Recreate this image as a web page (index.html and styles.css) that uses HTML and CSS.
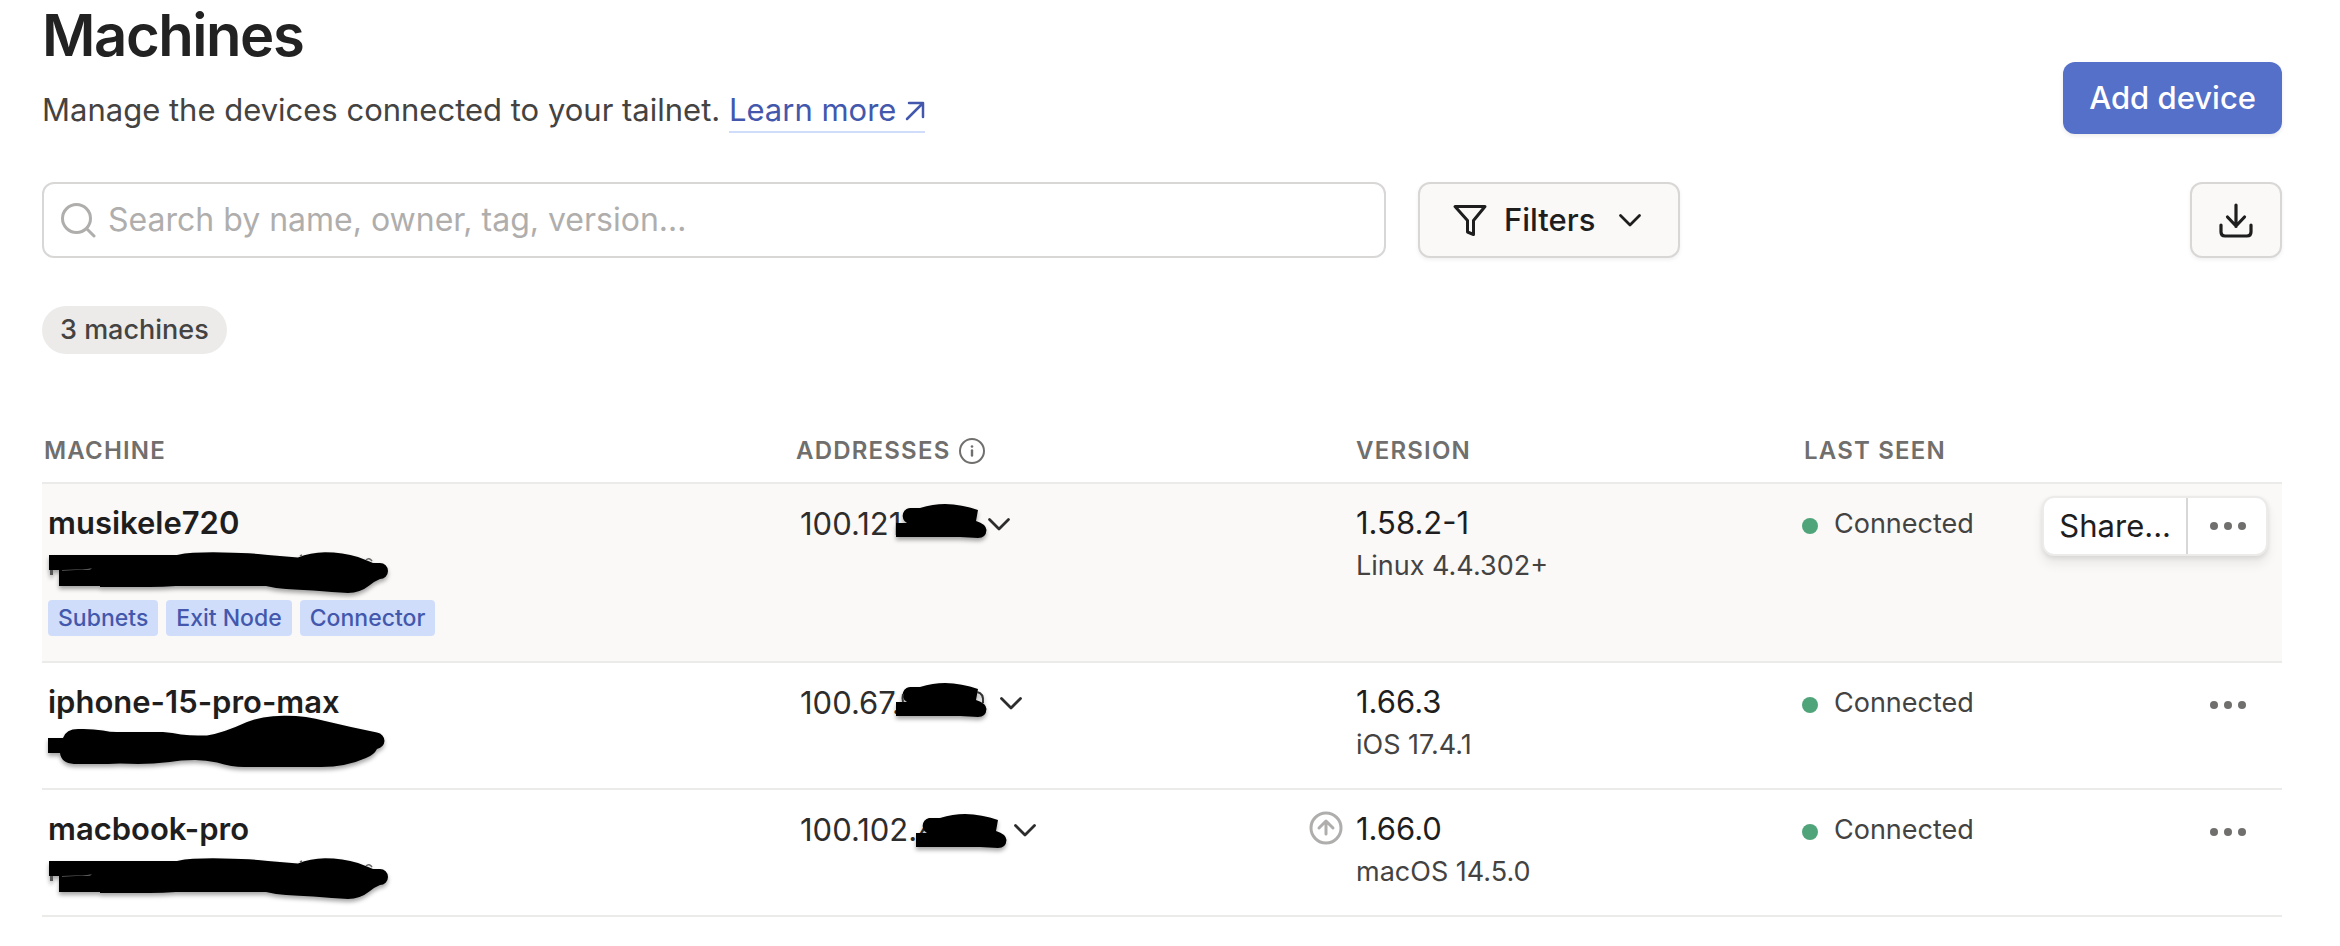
FILE: index.html
```html
<!DOCTYPE html>
<html lang="en">
<head>
<meta charset="utf-8">
<title>Machines</title>
<link rel="stylesheet" href="styles.css">
</head>
<body>
<svg class="sprite" aria-hidden="true">
  <symbol id="chevron" viewBox="0 0 24 24"><path d="M2.500 7.500l9.500 9.500 9.500-9.500" fill="none" stroke="currentColor" stroke-width="2.800" stroke-linecap="round" stroke-linejoin="round"/></symbol>
  <symbol id="dots" viewBox="0 0 36 8"><circle cx="4" cy="4" r="4"/><circle cx="18" cy="4" r="4"/><circle cx="32" cy="4" r="4"/></symbol>
  <symbol id="mark-user" viewBox="0 0 340 36" overflow="visible">
    <path d="M1 5H129Q136 3 145 2.700Q165 2 185 2.700Q205 3 220 5L250 7.500Q262 2.500 277 2.300Q295 2.500 310 7Q318 10 325 13H332A8 8 0 0 1 332 29Q327 31 322 35Q312 43 300 43Q285 42 265 40.500Q250 39.500 238 39Q228 38.500 218 36H128Q115 37 102 37H52V36H11V20H1Z"/>
    <path d="M2 20h3v5h-3z" fill="#555"/><path d="M14 20l20-.5 10-1-2 1-28 1z" fill="#999"/><path d="M252 6l2-1M318 10q3-3 6 1" stroke="#666" stroke-width="1.500" fill="none"/>
  </symbol>
  <symbol id="mark-ip" viewBox="0 0 92 36" overflow="visible">
    <path d="M1 19H12A8 8 0 0 1 17 4H25Q38 0 50 0Q67 .5 83 6L81 17Q91 20 91.500 26Q91 34 83 34L65 33H1Z"/>
  </symbol>
</svg>
<main class="page">
  <header class="head">
    <div>
      <h1 class="title">Machines</h1>
      <p class="lead">Manage the devices connected to your tailnet. <a class="link" href="#">Learn more <svg class="arrow" viewBox="0 0 20 20" aria-hidden="true"><path d="M2 18L18 2M4 2h14v14" fill="none" stroke="currentColor" stroke-width="2.500" stroke-linecap="round" stroke-linejoin="round"/></svg></a></p>
    </div>
    <button class="btn primary" type="button">Add device</button>
  </header>
  <div class="tools">
    <label class="search">
      <svg class="icon-lg" viewBox="0 0 36 36" aria-hidden="true"><circle cx="16.500" cy="16.500" r="14" fill="none" stroke="currentColor" stroke-width="3"/><path d="M27 27l7 7" stroke="currentColor" stroke-width="3" stroke-linecap="round"/></svg>
      <input class="search-input" type="text" aria-label="Search machines" placeholder="Search by name, owner, tag, version…">
    </label>
    <button class="btn plain filters" type="button">
      <svg class="icon-lg" viewBox="0 0 36 36" aria-hidden="true"><path d="M3 4.500h30L21.500 18.500V32.500l-6-2.500V18.500z" fill="none" stroke="currentColor" stroke-width="3" stroke-linejoin="round"/></svg>
      Filters
      <svg class="icon-sm" aria-hidden="true"><use href="#chevron"/></svg>
    </button>
    <button class="btn plain download" type="button" aria-label="Download">
      <svg class="icon-lg" viewBox="0 0 36 36" aria-hidden="true"><path d="M18 3v21.500M9.500 15l8.500 9 8.500-9M3 23v7q0 4 4 4h22q4 0 4-4v-7" fill="none" stroke="currentColor" stroke-width="3.200" stroke-linecap="round" stroke-linejoin="round"/></svg>
    </button>
  </div>
  <div class="count">3 machines</div>
  <table class="machines">
    <thead>
      <tr>
        <th>Machine</th>
        <th class="c-addr"><span class="th-flex">Addresses <svg class="info" viewBox="0 0 28 28" aria-hidden="true"><circle cx="14" cy="14" r="12" fill="none" stroke="currentColor" stroke-width="2"/><path d="M14 13.500v5" stroke="currentColor" stroke-width="2.400" stroke-linecap="round"/><circle cx="14" cy="9.500" r="1.300" fill="currentColor"/></svg></span></th>
        <th class="c-ver">Version</th>
        <th class="c-seen">Last seen</th>
        <th class="c-menu" aria-label="Actions"></th>
      </tr>
    </thead>
    <tbody>
      <tr class="hovered">
        <td class="machine">
          <div class="name">musikele720</div>
          <div class="user"><svg class="mark-user" aria-hidden="true"><use href="#mark-user"/></svg></div>
          <div class="tags"><span class="tag">Subnets</span><span class="tag">Exit Node</span><span class="tag">Connector</span></div>
        </td>
        <td class="addr"><button class="ip" type="button">100.121<svg class="mark-ip" aria-hidden="true"><use href="#mark-ip"/></svg><svg class="icon-sm tight" aria-hidden="true"><use href="#chevron"/></svg></button></td>
        <td class="ver"><div class="num">1.58.2-1</div><div class="os">Linux 4.4.302+</div></td>
        <td class="seen"><span class="status"><i class="dot"></i>Connected</span></td>
        <td class="menu"><div class="actions"><button class="share" type="button">Share...</button><button class="more" type="button" aria-label="More"><svg class="dots" aria-hidden="true"><use href="#dots"/></svg></button></div></td>
      </tr>
      <tr>
        <td class="machine">
          <div class="name">iphone-15-pro-max</div>
          <div class="user"><svg class="mark-user" viewBox="0 0 340 36" aria-hidden="true"><path d="M0 9H15Q18 0 30 0Q44-.5 55 1.500Q62 3 69 3H115Q125 3.500 133 5.500Q142 6.500 150 6.500H159Q175 4 199-7Q213-13 236-13.300Q258-13.500 277-8L303-2 329 3.500Q336 5 336.500 12Q336 18 329 20Q326 26 318 29Q298 38 273 38H196Q184 38 169 33.500Q158 31 147 31Q132 31 122 33Q105 35 90 35L72 34.500 60 35H26Q13 34 12 24H0Z"/></svg></div>
        </td>
        <td class="addr"><button class="ip" type="button">100.67.<svg class="mark-ip" aria-hidden="true"><use href="#mark-ip"/><path d="M82 9q7 1 6 11M8 11q-1 4 0 8" fill="none" stroke="#333" stroke-width="2"/></svg><svg class="icon-sm" aria-hidden="true"><use href="#chevron"/></svg></button></td>
        <td class="ver"><div class="num">1.66.3</div><div class="os">iOS 17.4.1</div></td>
        <td class="seen"><span class="status"><i class="dot"></i>Connected</span></td>
        <td class="menu"><div class="actions bare"><button class="more" type="button" aria-label="More"><svg class="dots" aria-hidden="true"><use href="#dots"/></svg></button></div></td>
      </tr>
      <tr>
        <td class="machine">
          <div class="name">macbook-pro</div>
          <div class="user"><svg class="mark-user" aria-hidden="true"><use href="#mark-user"/></svg></div>
        </td>
        <td class="addr"><button class="ip" type="button">100.102.4<svg class="mark-ip over-digit" aria-hidden="true"><use href="#mark-ip"/></svg><svg class="icon-sm near" aria-hidden="true"><use href="#chevron"/></svg></button></td>
        <td class="ver"><svg class="update" viewBox="0 0 36 36" role="img" aria-label="Update available"><path d="M18 24V12M11 18l7-7 7 7" fill="none" stroke="currentColor" stroke-width="3" stroke-linecap="round" stroke-linejoin="round"/><circle cx="18" cy="18" r="15" fill="none" stroke="currentColor" stroke-width="3"/></svg><div class="num">1.66.0</div><div class="os">macOS 14.5.0</div></td>
        <td class="seen"><span class="status"><i class="dot"></i>Connected</span></td>
        <td class="menu"><div class="actions bare"><button class="more" type="button" aria-label="More"><svg class="dots" aria-hidden="true"><use href="#dots"/></svg></button></div></td>
      </tr>
    </tbody>
  </table>
</main>
</body>
</html>
```
FILE: styles.css
```css
*, *::before, *::after { box-sizing: border-box; }

body {
  margin: 0;
  background: #fff;
  color: #1f1e1e;
  font: 400 31px/48px Inter, "Liberation Sans", sans-serif;
}

button, input { font: inherit; color: inherit; }
button { margin: 0; cursor: pointer; }
svg { display: block; flex: none; }

.sprite { position: absolute; width: 0; height: 0; }
.page { padding: 0 58px 24px 42px; }

.head { display: flex; justify-content: space-between; align-items: flex-end; }
.title {
  margin: 0 0 16px;
  font-size: 58px;
  line-height: 70px;
  font-weight: 600;
  letter-spacing: -0.025em;
  color: #232222;
}
.lead { margin: 0; color: #444342; }
.link {
  display: inline-block;
  line-height: 42px;
  color: #4358ad;
  text-decoration: none;
  border-bottom: 2px solid #d0ddfa;
}
.arrow { display: inline-block; width: 20px; height: 20px; }

.btn {
  display: flex;
  align-items: center;
  justify-content: center;
  border-radius: 12px;
  font-weight: 500;
}
.primary {
  height: 72px;
  padding: 0 26px;
  border: 0;
  background: #5470c8;
  color: #fff;
  box-shadow: 0 2px 4px rgba(0, 0, 0, .08);
}
.plain {
  height: 76px;
  border: 2px solid #d9d6d6;
  background: #faf9f8;
  box-shadow: 0 2px 4px rgba(0, 0, 0, .06);
}

.tools { display: flex; gap: 32px; margin-top: 48px; }
.search {
  display: flex;
  align-items: center;
  gap: 12px;
  width: 60%;
  height: 76px;
  padding: 0 16px;
  border: 2px solid #d9d6d6;
  border-radius: 12px;
  color: #afaead;
}
.search-input {
  flex: 1;
  min-width: 0;
  padding: 0;
  border: 0;
  outline: 0;
  background: none;
  color: #1f1e1e;
  font-size: 32px;
}
.search-input::placeholder { color: #afaead; opacity: 1; }
.filters { gap: 16px; padding: 0 36px 0 32px; }
.filters .icon-sm { margin-left: 6px; }
.download { width: 92px; margin-left: auto; padding: 0; }
.icon-lg { width: 36px; height: 36px; }
.icon-sm { width: 24px; height: 24px; }

.count {
  width: max-content;
  margin-top: 48px;
  padding: 0 18px;
  border-radius: 24px;
  background: #ecebea;
  color: #444342;
  font-size: 27px;
  font-weight: 500;
}

.machines {
  width: 100%;
  margin-top: 64px;
  table-layout: fixed;
  border-collapse: separate;
  border-spacing: 0;
}
th {
  padding: 15px 0 13px 2px;
  border-bottom: 2px solid #ebebea;
  color: #706f6d;
  font-size: 24px;
  line-height: 36px;
  font-weight: 600;
  letter-spacing: 0.05em;
  text-align: left;
  text-transform: uppercase;
}
.c-addr { width: 25%; }
.c-ver { width: 20%; }
.c-seen, .c-menu { width: 240px; }
.th-flex { display: flex; align-items: center; gap: 8px; }
.info { width: 28px; height: 28px; }

td {
  padding: 16px 0 23px;
  border-bottom: 2px solid #ebebea;
  vertical-align: top;
}
.hovered td { background: #faf9f8; }

.machine { padding-left: 6px; }
.name { font-weight: 600; line-height: 46px; }
.user { height: 40px; padding-top: 4px; }
.mark-user { width: 340px; height: 36px; }
.mark-user, .mark-ip { overflow: visible; filter: drop-shadow(0 3px 2px rgba(0, 0, 0, .35)); }

.tags { display: flex; gap: 8px; padding: 14px 0 2px; }
.tag {
  padding: 0 10px;
  border-radius: 4px;
  background: #d0ddfa;
  color: #4358ad;
  font-size: 23px;
  line-height: 36px;
  font-weight: 500;
}

.addr { padding-left: 6px; }
.ip {
  display: flex;
  align-items: center;
  padding: 0;
  border: 0;
  background: none;
  color: #2e2d2d;
}
.mark-ip { width: 92px; height: 36px; margin-top: -5px; margin-left: -6px; }
.over-digit { margin: 4px 0 0 -22px; }
.ip .icon-sm { margin-left: 12px; }
.ip .tight { margin-left: 0; }
.ip .near { margin-left: 6px; }

.ver { position: relative; padding-left: 2px; }
.num { line-height: 46px; }
.os { font-size: 27px; line-height: 40px; color: #444342; }
.update {
  position: absolute;
  left: -46px;
  top: 20px;
  width: 36px;
  height: 36px;
  color: #afaead;
}

.status {
  display: flex;
  align-items: center;
  gap: 16px;
  color: #444342;
  font-size: 27px;
}
.dot { width: 16px; height: 16px; margin-top: 4px; border-radius: 50%; background: #50a47a; }

.menu { padding: 12px 14px 0 0; }
.actions {
  display: flex;
  height: 60px;
  width: max-content;
  margin-left: auto;
  border: 2px solid #ecebea;
  border-radius: 12px;
  background: #fff;
  box-shadow: 0 8px 12px rgba(0, 0, 0, .07), 0 2px 5px rgba(0, 0, 0, .09);
}
.bare { border-color: transparent; background: none; box-shadow: none; }
.share, .more { border: 0; background: none; }
.share { padding: 0 15px; border-right: 2px solid #d9d6d6; }
.more { display: flex; align-items: center; width: 78px; padding: 0 22px; }
.dots { width: 36px; height: 8px; fill: #706f6d; }
```
